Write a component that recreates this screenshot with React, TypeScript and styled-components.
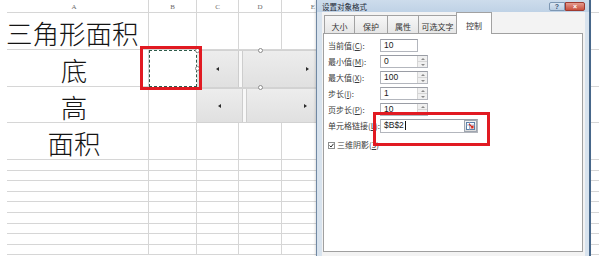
import React from 'react';
import styled, { createGlobalStyle } from 'styled-components';

const GRID = '#d6d6d6';
const RED = '#e11a22';

const GlobalStyle = createGlobalStyle`
  html, body { margin: 0; padding: 0; background: #ffffff; }
  body { font-family: "Noto Sans CJK SC", "Liberation Sans", sans-serif; }
`;

const Stage = styled.div`
  position: relative;
  width: 599px;
  height: 256px;
  overflow: hidden;
  background: #ffffff;
`;

/* ---------- spreadsheet ---------- */
const Sheet = styled.div`
  display: grid;
  grid-template-columns: 149px 48px 42px 43px 63px 65px 65px 65px 80px;
  grid-template-rows: 13px 37px 37px 36px 37px 11px 10px 11px 10px 11px 11px 10px 11px 10px;
`;

const Cell = styled.div<{ $first?: boolean; $marquee?: boolean }>`
  box-sizing: border-box;
  min-width: 0;
  display: flex;
  overflow: visible;
  border-right: 1px solid ${GRID};
  ${(p) =>
    p.$first
      ? `background: linear-gradient(${GRID}, ${GRID}) no-repeat 7px 100% / calc(100% - 7px) 1px;`
      : `border-bottom: 1px solid ${GRID};`}
  ${(p) => (p.$marquee ? `border: 1px dashed #2e5a49;` : '')}
`;

const HeaderCell = styled(Cell)`
  align-items: center;
  justify-content: center;
  font-family: "Liberation Serif", serif;
  font-size: 7px;
  color: #6a6a6a;
  padding-top: 1px;
`;

const TextCell = styled(Cell)<{ $align: 'left' | 'center' }>`
  align-items: center;
  justify-content: ${(p) => (p.$align === 'left' ? 'flex-start' : 'center')};
  padding-left: ${(p) => (p.$align === 'left' ? '6px' : '0')};
  padding-top: 4px;
  font-family: "Noto Sans CJK SC", sans-serif;
  font-weight: 300;
  font-size: 26.5px;
  line-height: 1;
  color: #141414;
  white-space: nowrap;
`;

/* ---------- floating form controls on the sheet ---------- */
const ScrollControl = styled.div<{ $top: number; $height: number }>`
  position: absolute;
  left: 197px;
  top: ${(p) => p.$top}px;
  width: 124px;
  height: ${(p) => p.$height}px;
  box-sizing: border-box;
  display: flex;
  background: linear-gradient(#ededed, #e0e0e0);
  border-top: 1px solid #d2d2d2;
  border-bottom: 1px solid #d2d2d2;
`;

const ArrowButton = styled.div<{ $w: number }>`
  flex: none;
  width: ${(p) => p.$w}px;
  display: flex;
  align-items: center;
  justify-content: center;
`;

const Thumb = styled.div`
  flex: none;
  width: 3px;
  background: #f8f8f8;
  border-left: 1px solid #cdcdcd;
  border-right: 1px solid #cdcdcd;
`;

const Track = styled.div`
  flex: 1;
`;

const Tri = styled.span<{ $dir: 'left' | 'right' }>`
  width: 0;
  height: 0;
  border-top: 2.5px solid transparent;
  border-bottom: 2.5px solid transparent;
  ${(p) => (p.$dir === 'left' ? 'border-right: 3px solid #2a2a2a;' : 'border-left: 3px solid #2a2a2a;')}
`;

const Handle = styled.span<{ $x: number; $y: number }>`
  position: absolute;
  left: ${(p) => p.$x - 2.5}px;
  top: ${(p) => p.$y - 2.5}px;
  width: 5px;
  height: 5px;
  box-sizing: border-box;
  border-radius: 50%;
  background: #ffffff;
  border: 1px solid #8c8c8c;
`;

const RedBox = styled.div<{ $x: number; $y: number; $w: number; $h: number }>`
  position: absolute;
  left: ${(p) => p.$x}px;
  top: ${(p) => p.$y}px;
  width: ${(p) => p.$w}px;
  height: ${(p) => p.$h}px;
  box-sizing: border-box;
  border: 3px solid ${RED};
  z-index: 5;
`;

/* ---------- dialog ---------- */
const Dialog = styled.div`
  position: absolute;
  left: 316px;
  top: 0;
  width: 275px;
  height: 256px;
  box-sizing: border-box;
  display: flex;
  flex-direction: column;
  border-left: 1px solid #7088a3;
  border-right: 2px solid #47678a;
  background: #d8e3ee;
  box-shadow: -1px 0 2px rgba(0, 0, 0, 0.12);
  z-index: 3;
`;

const TitleBar = styled.div`
  flex: none;
  height: 12px;
  display: flex;
  align-items: center;
  padding: 0 4px 0 5px;
  background: linear-gradient(#cddcec, #bfd2e6);
`;

const Title = styled.span`
  flex: 1;
  font-size: 7.5px;
  line-height: 1;
  color: #1f2a36;
  padding-top: 1px;
`;

const CaptionButton = styled.div<{ $w: number; $danger?: boolean }>`
  width: ${(p) => p.$w}px;
  height: 9px;
  box-sizing: border-box;
  display: flex;
  align-items: center;
  justify-content: center;
  font-family: "Liberation Sans", sans-serif;
  font-size: 7px;
  font-weight: bold;
  line-height: 1;
  border: 1px solid ${(p) => (p.$danger ? '#9e3a30' : '#7d97b3')};
  background: ${(p) => (p.$danger ? 'linear-gradient(#e49a8e, #c94f3d)' : 'linear-gradient(#dbe7f3, #b9cde2)')};
  color: ${(p) => (p.$danger ? '#ffffff' : '#3c5677')};
  border-radius: ${(p) => (p.$danger ? '0 2px 2px 0' : '2px 0 0 2px')};
`;

const Frame = styled.div`
  flex: 1;
  display: flex;
  padding: 0 4px 0 5px;
`;

const Client = styled.div`
  flex: 1;
  display: flex;
  flex-direction: column;
  background: #f3f3f3;
  padding: 0 2px 4px 1px;
`;

const TabStrip = styled.div`
  flex: none;
  height: 21px;
  display: flex;
  align-items: flex-end;
  padding-left: 1px;
`;

const Tab = styled.div<{ $w: number; $active?: boolean }>`
  position: relative;
  width: ${(p) => p.$w}px;
  height: ${(p) => (p.$active ? 22 : 18)}px;
  box-sizing: border-box;
  margin-right: -1px;
  margin-bottom: ${(p) => (p.$active ? -1 : 0)}px;
  display: flex;
  align-items: flex-end;
  justify-content: center;
  padding-bottom: ${(p) => (p.$active ? 4 : 2)}px;
  font-size: 8px;
  line-height: 1;
  color: #333333;
  border: 1px solid #a2a2a2;
  border-bottom: none;
  background: ${(p) => (p.$active ? '#ffffff' : 'linear-gradient(#f7f7f7, #e6e6e6)')};
  z-index: ${(p) => (p.$active ? 1 : 0)};
`;

const Panel = styled.div`
  flex: 1;
  box-sizing: border-box;
  background: #ffffff;
  border: 1px solid #a0a0a0;
  padding: 5px 0 0 4px;
  display: flex;
  flex-direction: column;
`;

const Form = styled.div`
  display: grid;
  grid-template-columns: 52px auto;
  grid-auto-rows: 13px;
  row-gap: 3px;
  align-items: center;
`;

const Label = styled.span`
  font-size: 8px;
  line-height: 1;
  color: #3b3b3b;
  white-space: nowrap;
  u { text-underline-offset: 1px; }
`;

const Field = styled.div<{ $w: number; $h?: number }>`
  width: ${(p) => p.$w}px;
  height: ${(p) => p.$h ?? 13}px;
  box-sizing: border-box;
  display: flex;
  align-items: center;
  border: 1px solid #b3b6bd;
  border-top-color: #9a9da5;
  background: #ffffff;
`;

const Value = styled.span`
  flex: 1;
  display: flex;
  align-items: center;
  padding-left: 3px;
  font-family: "Liberation Sans", sans-serif;
  font-size: 8.5px;
  line-height: 1;
  color: #1a1a1a;
`;

const Caret = styled.span`
  width: 1px;
  height: 9px;
  background: #111111;
  margin-left: 1px;
`;

const Spinner = styled.div`
  flex: none;
  width: 9px;
  height: 100%;
  display: flex;
  flex-direction: column;
  border-left: 1px solid #d6d6d6;
  background: #f0f0f0;
`;

const SpinHalf = styled.div`
  flex: 1;
  display: flex;
  align-items: center;
  justify-content: center;
  & + & { border-top: 1px solid #d6d6d6; }
`;

const SpinTri = styled.span<{ $up?: boolean }>`
  width: 0;
  height: 0;
  border-left: 2px solid transparent;
  border-right: 2px solid transparent;
  ${(p) => (p.$up ? 'border-bottom: 2px solid #8a8a8a;' : 'border-top: 2px solid #8a8a8a;')}
`;

const RefButton = styled.div`
  flex: none;
  width: 13px;
  height: 12px;
  box-sizing: border-box;
  display: flex;
  align-items: center;
  justify-content: center;
  border: 1px solid #9fa6b0;
  background: linear-gradient(#f4f4f4, #dcdcdc);
`;

const CheckRow = styled.div`
  display: flex;
  align-items: center;
  gap: 2px;
  margin-top: 9px;
`;

const CheckBox = styled.span`
  width: 7px;
  height: 7px;
  box-sizing: border-box;
  border: 1px solid #8e8f8f;
  background: #ffffff;
  display: flex;
  align-items: center;
  justify-content: center;
`;

type Row = { label: string; key: string; value: string; w: number; spin?: boolean };

const ROWS: Row[] = [
  { label: '当前值', key: 'C', value: '10', w: 38 },
  { label: '最小值', key: 'M', value: '0', w: 48, spin: true },
  { label: '最大值', key: 'X', value: '100', w: 48, spin: true },
  { label: '步长', key: 'I', value: '1', w: 48, spin: true },
  { label: '页步长', key: 'P', value: '10', w: 48, spin: true },
];

const COLS = ['A', 'B', 'C', 'D', 'E', '', '', '', ''];

const BIG: { text: string; align: 'left' | 'center' }[] = [
  { text: '三角形面积', align: 'left' },
  { text: '底', align: 'center' },
  { text: '高', align: 'center' },
  { text: '面积', align: 'center' },
];

const SMALL_ROWS = 9;

function FormLabel({ label, k }: { label: string; k: string }) {
  return (
    <Label>
      {label}(<u>{k}</u>):
    </Label>
  );
}

export default function App() {
  return (
    <>
      <GlobalStyle />
      <Stage>
        <Sheet>
          {COLS.map((c, i) => (
            <HeaderCell key={`h${i}`} $first={i === 0}>
              {c}
            </HeaderCell>
          ))}
          {BIG.map((r, ri) =>
            COLS.map((_, ci) =>
              ci === 0 ? (
                <TextCell key={`b${ri}-${ci}`} $first $align={r.align}>
                  {r.text}
                </TextCell>
              ) : (
                <Cell key={`b${ri}-${ci}`} $marquee={ri === 1 && ci === 1} />
              )
            )
          )}
          {Array.from({ length: SMALL_ROWS }).map((_, ri) =>
            COLS.map((__, ci) => <Cell key={`s${ri}-${ci}`} $first={ci === 0} />)
          )}
        </Sheet>

        <ScrollControl $top={50} $height={38}>
          <ArrowButton $w={41}>
            <Tri $dir="left" />
          </ArrowButton>
          <Thumb />
          <Track />
          <ArrowButton $w={28}>
            <Tri $dir="right" />
          </ArrowButton>
        </ScrollControl>
        <ScrollControl $top={88} $height={35}>
          <ArrowButton $w={45}>
            <Tri $dir="left" />
          </ArrowButton>
          <Thumb />
          <Track />
          <ArrowButton $w={32}>
            <Tri $dir="right" />
          </ArrowButton>
        </ScrollControl>

        <Handle $x={197.5} $y={50} />
        <Handle $x={197.5} $y={68} />
        <Handle $x={260.5} $y={50} />
        <Handle $x={260.5} $y={87} />

        <RedBox $x={140} $y={46} $w={62} $h={44} />

        <Dialog>
          <TitleBar>
            <Title>设置对象格式</Title>
            <CaptionButton $w={16}>?</CaptionButton>
            <CaptionButton $w={20} $danger>
              ×
            </CaptionButton>
          </TitleBar>
          <Frame>
            <Client>
              <TabStrip>
                <Tab $w={31}>大小</Tab>
                <Tab $w={34}>保护</Tab>
                <Tab $w={32}>属性</Tab>
                <Tab $w={39}>可选文字</Tab>
                <Tab $w={36} $active>
                  控制
                </Tab>
              </TabStrip>
              <Panel>
                <Form>
                  {ROWS.map((r) => (
                    <React.Fragment key={r.key}>
                      <FormLabel label={r.label} k={r.key} />
                      <Field $w={r.w}>
                        <Value>{r.value}</Value>
                        {r.spin && (
                          <Spinner>
                            <SpinHalf>
                              <SpinTri $up />
                            </SpinHalf>
                            <SpinHalf>
                              <SpinTri />
                            </SpinHalf>
                          </Spinner>
                        )}
                      </Field>
                    </React.Fragment>
                  ))}
                  <FormLabel label="单元格链接" k="L" />
                  <Field $w={98} $h={14}>
                    <Value>
                      $B$2
                      <Caret />
                    </Value>
                    <RefButton>
                      <svg width="9" height="8" viewBox="0 0 9 8">
                        <rect x="0.5" y="0.5" width="8" height="7" fill="#ffffff" stroke="#5b7fa8" />
                        <line x1="0.5" y1="3" x2="8.5" y2="3" stroke="#9db4cf" />
                        <line x1="3.5" y1="0.5" x2="3.5" y2="7.5" stroke="#9db4cf" />
                        <path d="M3 2 L7 6 M7 3.5 L7 6 L4.5 6" stroke="#d42a1e" strokeWidth="1.2" fill="none" />
                      </svg>
                    </RefButton>
                  </Field>
                </Form>
                <CheckRow>
                  <CheckBox>
                    <svg width="5" height="5" viewBox="0 0 5 5">
                      <path d="M0.5 2.5 L2 4 L4.5 0.8" stroke="#2b2b2b" strokeWidth="1" fill="none" />
                    </svg>
                  </CheckBox>
                  <Label>
                    三维阴影(<u>3</u>)
                  </Label>
                </CheckRow>
              </Panel>
            </Client>
          </Frame>
        </Dialog>

        <RedBox $x={373} $y={112} $w={117} $h={34} />
      </Stage>
    </>
  );
}
